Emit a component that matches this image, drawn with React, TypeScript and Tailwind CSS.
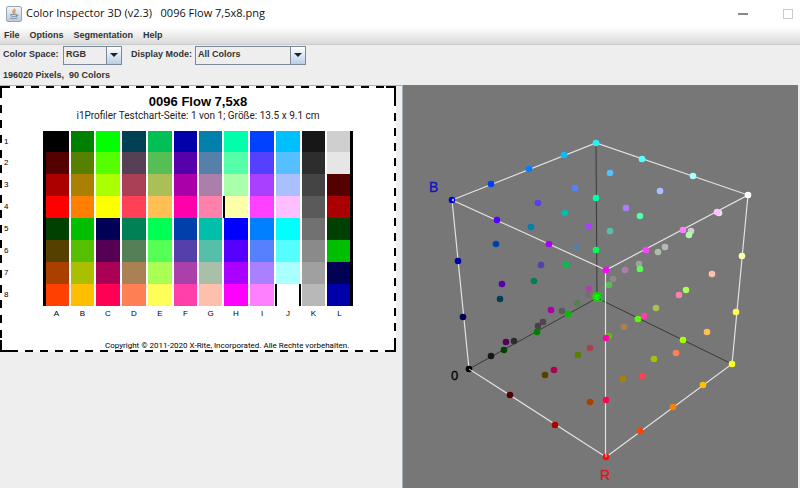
import React from "react";

const columns = [
  { letter: "A", width: "w-[27px]" },
  { letter: "B", width: "w-[25px]" },
  { letter: "C", width: "w-[26px]" },
  { letter: "D", width: "w-[26px]" },
  { letter: "E", width: "w-[26px]" },
  { letter: "F", width: "w-[25px]" },
  { letter: "G", width: "w-[25px]" },
  { letter: "H", width: "w-[26px]" },
  { letter: "I", width: "w-[26px]" },
  { letter: "J", width: "w-[26px]" },
  { letter: "K", width: "w-[25px]" },
  { letter: "L", width: "w-[27px]" },
];

const patches: string[][] = [
  ["#000000", "#008000", "#00ff00", "#004055", "#00bf55", "#0000aa", "#0080aa", "#00ffaa", "#0040ff", "#00bfff", "#171717", "#cfcfcf"],
  ["#550000", "#558000", "#55ff00", "#554055", "#55bf55", "#5500aa", "#5580aa", "#55ffaa", "#5540ff", "#55bfff", "#2d2d2d", "#e6e6e6"],
  ["#aa0000", "#aa8000", "#aaff00", "#aa4055", "#aabf55", "#aa00aa", "#aa80aa", "#aaffaa", "#aa40ff", "#aabfff", "#444444", "#550000"],
  ["#ff0000", "#ff8000", "#ffff00", "#ff4055", "#ffbf55", "#ff00aa", "#ff80aa", "#ffffaa", "#ff40ff", "#ffbfff", "#5a5a5a", "#aa0000"],
  ["#004000", "#00bf00", "#000055", "#008055", "#00ff55", "#0040aa", "#00bfaa", "#0000ff", "#0080ff", "#00ffff", "#717171", "#004000"],
  ["#554000", "#55bf00", "#550055", "#558055", "#55ff55", "#5540aa", "#55bfaa", "#5500ff", "#5580ff", "#55ffff", "#8a8a8a", "#00bf00"],
  ["#aa4000", "#aabf00", "#aa0055", "#aa8055", "#aaff55", "#aa40aa", "#aabfaa", "#aa00ff", "#aa80ff", "#aaffff", "#a0a0a0", "#000055"],
  ["#ff4000", "#ffbf00", "#ff0055", "#ff8055", "#ffff55", "#ff40aa", "#ffbfaa", "#ff00ff", "#ff80ff", "#ffffff", "#b8b8b8", "#0000aa"],
];

function patchBorder(row: number, col: number): string {
  if (col === 0) return "border-l-[3px] border-r border-l-black border-r-white";
  if (col === 11) return "border-l border-r-[3px] border-l-white border-r-black";
  if (row === 3 && col === 7) return "border-l-2 border-r border-l-black border-r-white";
  if (row === 7 && col === 9) return "border-x-2 border-black";
  return "border-x border-white";
}

type Dot = [number, number, string];

const backDots: Dot[] = [
  [575, 188, "#5580ff"], [538, 203, "#5540ea"], [596, 198, "#00ffaa"], [565, 213, "#00bfaa"],
  [531, 227, "#0080aa"], [589, 226, "#aa40ff"], [496, 244, "#0040aa"], [577, 247, "#5580aa"],
  [596, 250, "#00ff55"], [610, 173, "#55bfff"], [610, 231, "#55bfaa"], [660, 191, "#aabfff"],
  [626, 208, "#aa80ff"], [640, 216, "#55ffaa"], [719, 213, "#e6e6e6"], [691, 231, "#cfcfcf"],
  [689, 235, "#aaffaa"], [665, 247, "#b8b8b8"], [658, 252, "#aabfaa"], [541, 265, "#5540aa"],
  [566, 265, "#00bf55"], [502, 284, "#5500aa"], [534, 281, "#008055"], [500, 299, "#004055"],
  [588, 295, "#717171"], [589, 289, "#aa40aa"], [577, 303, "#558055"], [562, 311, "#5a5a5a"],
  [551, 310, "#aa00aa"], [568, 314, "#00bf00"], [543, 322, "#554055"], [538, 326, "#444444"],
  [537, 332, "#008000"], [514, 341, "#2d2d2d"], [506, 342, "#550055"], [504, 350, "#004000"],
  [491, 356, "#171717"], [590, 348, "#aa4055"], [578, 355, "#558000"], [545, 375, "#554000"],
  [554, 370, "#aa0055"], [639, 264, "#a0a0a0"], [640, 269, "#55ff55"], [625, 270, "#aa80aa"],
  [613, 279, "#8a8a8a"], [609, 285, "#55bf55"], [712, 274, "#ffbfaa"], [686, 290, "#aaff55"],
  [679, 295, "#ff80aa"], [656, 308, "#aabf55"], [644, 316, "#ff40aa"], [638, 319, "#55ff00"],
  [624, 327, "#aa8055"], [609, 336, "#55bf00"], [683, 340, "#aaff00"], [707, 332, "#ffbf55"],
  [676, 353, "#ff8055"], [654, 359, "#aabf00"], [642, 376, "#ff4055"], [623, 379, "#aa8000"],
  [590, 402, "#aa4000"], [597, 297, "#00ff00"],
];

const edgeDots: Dot[] = [
  [596, 143, "#22f4f4"], [564, 155, "#00bfff"], [529, 169, "#0080ff"], [491, 184, "#0040f4"],
  [642, 159, "#55ffff"], [693, 176, "#aaffff"], [717, 212, "#ffbfff"],
  [497, 220, "#5500ff"], [549, 244, "#aa00ff"], [606, 270, "#ff00ff"], [646, 250, "#ff40ff"],
  [683, 230, "#ff80ff"], [748, 195, "#ffffff"], [742, 256, "#ffffaa"], [736, 312, "#ffff55"],
  [458, 261, "#0000aa"], [463, 317, "#000055"], [606, 338, "#ff00aa"], [606, 400, "#ff0055"],
  [510, 395, "#550000"], [555, 425, "#aa0000"], [640, 431, "#ff4000"], [673, 407, "#ff8000"],
  [703, 385, "#ffbf00"], [732, 364, "#ffff22"],
  [452, 200, "#0000dd"], [469, 369, "#000000"], [606, 457, "#f01010"],
];

function Dots({ dots }: { dots: Dot[] }) {
  return (
    <>
      {dots.map(([x, y, color]) => (
        <circle key={`${x}-${y}`} cx={x} cy={y} r="3.3" fill={color} />
      ))}
    </>
  );
}

function ColorCube() {
  return (
    <svg
      viewBox="403 85 395 403"
      className="block h-auto w-full"
      role="img"
      aria-label="RGB color cube"
      fontFamily="'Liberation Sans', Arial, sans-serif"
    >
      <path d="M469 369 597 298 596 143M597 298 732 364" stroke="#393939" fill="none" />
      <Dots dots={backDots} />
      <g stroke="#e2e2e2" strokeWidth="1.2" fill="none">
        <path d="M452 200 596 143 748 195 606 270Z" />
        <path d="M452 200 469 369 606 457 732 364 748 195M605.5 270V457" />
      </g>
      <Dots dots={edgeDots} />
      <path d="M452 200 454 199M452 200 454 201M469 369 472 371M606 454V457" stroke="#e2e2e2" fill="none" />
      <text x="592" y="302" fontSize="15" fill="#10d010" stroke="#10d010" strokeWidth="0.3">G</text>
      <text x="429" y="192" fontSize="14" fill="#1010c8" stroke="#1010c8" strokeWidth="0.3">B</text>
      <text x="451" y="380" fontSize="13" fill="#000000" stroke="#000000" strokeWidth="0.3">0</text>
      <text x="600" y="480" fontSize="14" fill="#e01414" stroke="#e01414" strokeWidth="0.3">R</text>
    </svg>
  );
}

function TestChart() {
  return (
    <section className="relative w-[396px] bg-white pt-2 pb-[2px] text-black">
      <svg className="absolute inset-0 h-full w-full" aria-hidden="true">
        <rect x="1" y="1" width="394" height="264" fill="none" stroke="#000" strokeWidth="2" strokeDasharray="8 7" />
        <path d="M1 10V1H10M386 1H395V12M1 254V265H10M386 265H395V254" fill="none" stroke="#000" strokeWidth="2" />
      </svg>
      <h1 className="text-center text-[13px] leading-[15px] font-bold">0096 Flow 7,5x8</h1>
      <p className="text-center font-[Roboto,sans-serif] text-[10px] leading-[13px] text-[#222]">
        i1Profiler Testchart-Seite: 1 von 1; Größe: 13.5 x 9.1 cm
      </p>
      <table className="mt-[9px] w-[353px] table-fixed border-separate border-spacing-0 text-[8px] leading-[10px]">
        <colgroup>
          <col className="w-[43px]" />
          {columns.map((c) => (
            <col key={c.letter} className={c.width} />
          ))}
        </colgroup>
        <tbody>
          {patches.map((row, r) => (
            <tr key={r} className={r === 0 ? "h-[21px]" : "h-[22px]"}>
              <th scope="row" className="p-0 pl-1 text-left align-middle font-normal">
                {r + 1}
              </th>
              {row.map((color, c) => (
                <td key={c} className={`p-0 ${patchBorder(r, c)}`} style={{ backgroundColor: color }} />
              ))}
            </tr>
          ))}
        </tbody>
        <tfoot>
          <tr>
            <td className="p-0" />
            {columns.map((c) => (
              <th key={c.letter} scope="col" className="p-0 pt-[3px] text-center font-normal">
                {c.letter}
              </th>
            ))}
          </tr>
        </tfoot>
      </table>
      <p className="mt-[22px] pl-[105px] font-[Roboto,sans-serif] text-[8px] leading-[9px] whitespace-nowrap">
        Copyright © 2011-2020 X-Rite, Incorporated. Alle Rechte vorbehalten.
      </p>
    </section>
  );
}

function Combo({ id, width, options }: { id: string; width: string; options: string[] }) {
  return (
    <div className={`relative h-[19px] ${width}`}>
      <select
        id={id}
        className="block h-full w-full appearance-none border border-[#7a8a99] bg-[#eeeeee] pr-4 pl-[2px] text-[9px] font-bold text-[#333] outline-none"
      >
        {options.map((o) => (
          <option key={o}>{o}</option>
        ))}
      </select>
      <span className="pointer-events-none absolute inset-y-px right-px flex w-[15px] items-center justify-center border-l border-[#7a8a99] bg-linear-to-b from-white to-[#b8cfe5]">
        <svg width="8" height="4" viewBox="0 0 8 4" aria-hidden="true">
          <path d="M0 0H8L4 4Z" fill="#222" />
        </svg>
      </span>
    </div>
  );
}

function JavaIcon() {
  return (
    <svg width="16" height="16" viewBox="0 0 16 16" aria-hidden="true">
      <defs>
        <linearGradient id="java-tile" x1="0" y1="0" x2="0" y2="1">
          <stop offset="0" stopColor="#f5f7f9" />
          <stop offset="1" stopColor="#bdc9d5" />
        </linearGradient>
      </defs>
      <rect x="0.5" y="0.5" width="15" height="15" rx="1.5" fill="url(#java-tile)" stroke="#9aa6b4" />
      <path d="M8.5 2.5C9.5 4 6 4.5 7 6.5L8 8M10 4.5C8.5 5 8.3 6 9 7.5" fill="none" stroke="#e08a4a" strokeWidth="1.3" />
      <path d="M4.5 8.5H10.5V10Q7.5 11.5 5 10ZM10.5 9H12Q12 10.5 10 10.5M4 12Q7.5 13.5 11.5 12" fill="none" stroke="#7f97b0" />
    </svg>
  );
}

export default function App() {
  return (
    <div className="flex min-h-screen flex-col bg-[#eeeeee] font-['Liberation_Sans',Arial,sans-serif] text-[#333]">
      <header className="flex h-[27px] items-center bg-white pr-[7px] pl-[6px]">
        <JavaIcon />
        <span className="ml-1 font-['Open_Sans','Noto_Sans',sans-serif] text-[11px] whitespace-pre text-[#111]">
          {"Color Inspector 3D (v2.3)   0096 Flow 7,5x8.png"}
        </span>
        <div className="ml-auto flex items-center gap-[35px]">
          <button type="button" aria-label="Minimize" className="flex h-4 w-[10px] items-center">
            <span className="h-[2px] w-full bg-[#888]" />
          </button>
          <button type="button" aria-label="Maximize" className="h-[10px] w-[10px] border border-[#ccc]" />
        </div>
      </header>
      <nav className="flex h-[18px] items-center gap-[10px] border-b border-[#cccccc] bg-linear-to-b from-white to-[#dadada] pl-1 text-[9px] font-bold">
        <button type="button">File</button>
        <button type="button">Options</button>
        <button type="button">Segmentation</button>
        <button type="button">Help</button>
      </nav>
      <div className="flex h-[20px] items-center text-[9px] font-bold">
        <label htmlFor="space" className="w-[63px] pl-[3px]">Color Space:</label>
        <Combo id="space" width="w-[59px]" options={["RGB", "YUV", "HSB", "Lab"]} />
        <label htmlFor="mode" className="w-[73px] pl-[9px]">Display Mode:</label>
        <Combo id="mode" width="w-[111px]" options={["All Colors", "Frequency Weighted", "Histogram"]} />
      </div>
      <div className="flex h-[20px] items-center pt-px pl-[3px] text-[9px] font-bold whitespace-pre">
        {"196020 Pixels,  90 Colors"}
      </div>
      <main className="flex flex-1">
        <div className="w-[403px] shrink-0 border-t border-r border-[#a5b3bd]">
          <TestChart />
        </div>
        <div className="min-w-0 flex-1 border-r-2 border-[#eeeeee] bg-[#777777]">
          <ColorCube />
        </div>
      </main>
    </div>
  );
}
